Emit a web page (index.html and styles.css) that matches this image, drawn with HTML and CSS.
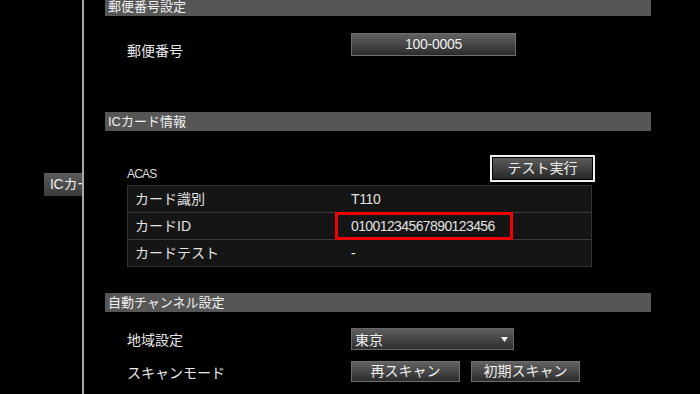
FILE: index.html
```html
<!DOCTYPE html>
<html lang="ja">
<head>
<meta charset="utf-8">
<link rel="stylesheet" href="styles.css">
</head>
<body>
<div class="screen">
  <aside class="side">
    <div class="tab"><span>ICカード設定</span></div>
  </aside>
  <div class="divider"></div>
  <main class="main">
    <section class="section">
      <div class="sec-head">郵便番号設定</div>
      <div class="row postal-row">
        <div class="label postal-label">郵便番号</div>
        <div class="btn postal-btn">100-0005</div>
      </div>
    </section>

    <section class="section ic-section">
      <div class="sec-head">ICカード情報</div>
      <div class="acas-row">
        <div class="acas-label">ACAS</div>
        <div class="test-btn">テスト実行</div>
      </div>
      <div class="card-table">
        <div class="trow">
          <div class="tkey">カード識別</div>
          <div class="tval">T110</div>
        </div>
        <div class="trow">
          <div class="tkey">カードID</div>
          <div class="tval num">01001234567890123456<span class="highlight"></span></div>
        </div>
        <div class="trow">
          <div class="tkey">カードテスト</div>
          <div class="tval">-</div>
        </div>
      </div>
    </section>

    <section class="section ch-section">
      <div class="sec-head">自動チャンネル設定</div>
      <div class="row region-row">
        <div class="label">地域設定</div>
        <div class="select">
          <span>東京</span>
          <svg class="arrow" width="7" height="5" viewBox="0 0 7 5"><polygon points="0,0 7,0 3.5,5" fill="#f2f2f2"/></svg>
        </div>
      </div>
      <div class="row scan-row">
        <div class="label">スキャンモード</div>
        <div class="btns">
          <div class="btn scan-btn">再スキャン</div>
          <div class="btn scan-btn">初期スキャン</div>
        </div>
      </div>
    </section>
  </main>
</div>
</body>
</html>
```

FILE: styles.css
```css
* { box-sizing: border-box; }
html, body {
  margin: 0;
  padding: 0;
  background: #000;
}
body {
  width: 700px;
  height: 394px;
  overflow: hidden;
  font-family: "Liberation Sans", "Noto Sans CJK JP", sans-serif;
  color: #e6e6e6;
}
.screen {
  display: flex;
  height: 394px;
}
.side {
  width: 82px;
  flex: none;
  padding-top: 173px;
  display: flex;
  flex-direction: column;
  align-items: flex-end;
}
.tab {
  width: 38px;
  height: 23px;
  overflow: hidden;
  white-space: nowrap;
  background: linear-gradient(#5c5c5c, #3a3a3a);
  font-size: 14px;
  line-height: 23px;
  padding-left: 6px;
  color: #eee;
  letter-spacing: -0.3px;
}
.divider {
  width: 2px;
  flex: none;
  background: #a8a8a8;
}
.main {
  width: 567px;
  padding-left: 21px;
  margin-top: -3px;
  display: flex;
  flex-direction: column;
}
.sec-head {
  height: 19px;
  background: #565656;
  font-size: 13px;
  line-height: 19px;
  padding-left: 3px;
  color: #f0f0f0;
}
.row {
  display: flex;
  padding-left: 22px;
}
.label {
  width: 224px;
  flex: none;
  font-size: 14px;
  color: #e8e8e8;
}
.btn {
  background: linear-gradient(#626262, #2c2c2c);
  border: 1px solid #6e6e6e;
  color: #eee;
  text-align: center;
  font-size: 14px;
}
.postal-row {
  margin-top: 17px;
  height: 23px;
  align-items: flex-start;
}
.postal-label {
  padding-top: 10px;
  line-height: 16px;
}
.postal-btn {
  width: 165px;
  height: 23px;
  line-height: 21px;
  letter-spacing: -0.3px;
}
.ic-section { margin-top: 56px; }
.acas-row {
  display: flex;
  align-items: flex-end;
  padding-left: 22px;
  padding-right: 56px;
  margin-top: 24px;
}
.acas-label {
  font-size: 12px;
  line-height: 14px;
  margin-bottom: 1px;
  letter-spacing: -0.8px;
  color: #ddd;
}
.test-btn {
  margin-left: auto;
  width: 105px;
  height: 27px;
  border: 2px solid #f2f2f2;
  box-shadow: inset 0 0 0 1px #000;
  background: linear-gradient(#5e5e5e, #262626);
  color: #eee;
  text-align: center;
  font-size: 14px;
  line-height: 23px;
}
.card-table {
  margin-top: 3px;
  margin-left: 22px;
  width: 465px;
  border: 1px solid #333;
  background: #151515;
}
.trow {
  display: flex;
  height: 27px;
  border-bottom: 1px solid #3a3a3a;
}
.trow:last-child {
  height: 26px;
  border-bottom: none;
}
.tkey {
  width: 223px;
  flex: none;
  padding-left: 7px;
  font-size: 14px;
  line-height: 26px;
  color: #e2e2e2;
}
.tval {
  position: relative;
  font-size: 14px;
  line-height: 26px;
  color: #e2e2e2;
  letter-spacing: -0.4px;
}
.tval.num { letter-spacing: -0.6px; }
.highlight {
  position: absolute;
  left: -16px;
  top: -1px;
  width: 178px;
  height: 28px;
  border: 3px solid #f00000;
}
.ch-section { margin-top: 26px; }
.region-row {
  margin-top: 16px;
  align-items: center;
}
.select {
  width: 163px;
  height: 22px;
  background: linear-gradient(#5e5e5e, #2e2e2e);
  border: 1px solid #666;
  display: flex;
  align-items: center;
  padding-left: 3px;
  padding-right: 5px;
  font-size: 14px;
  color: #eee;
}
.arrow { margin-left: auto; }
.scan-row {
  margin-top: 11px;
  align-items: center;
}
.btns {
  display: flex;
  gap: 11px;
}
.scan-btn {
  width: 109px;
  height: 21px;
  line-height: 19px;
}
```
